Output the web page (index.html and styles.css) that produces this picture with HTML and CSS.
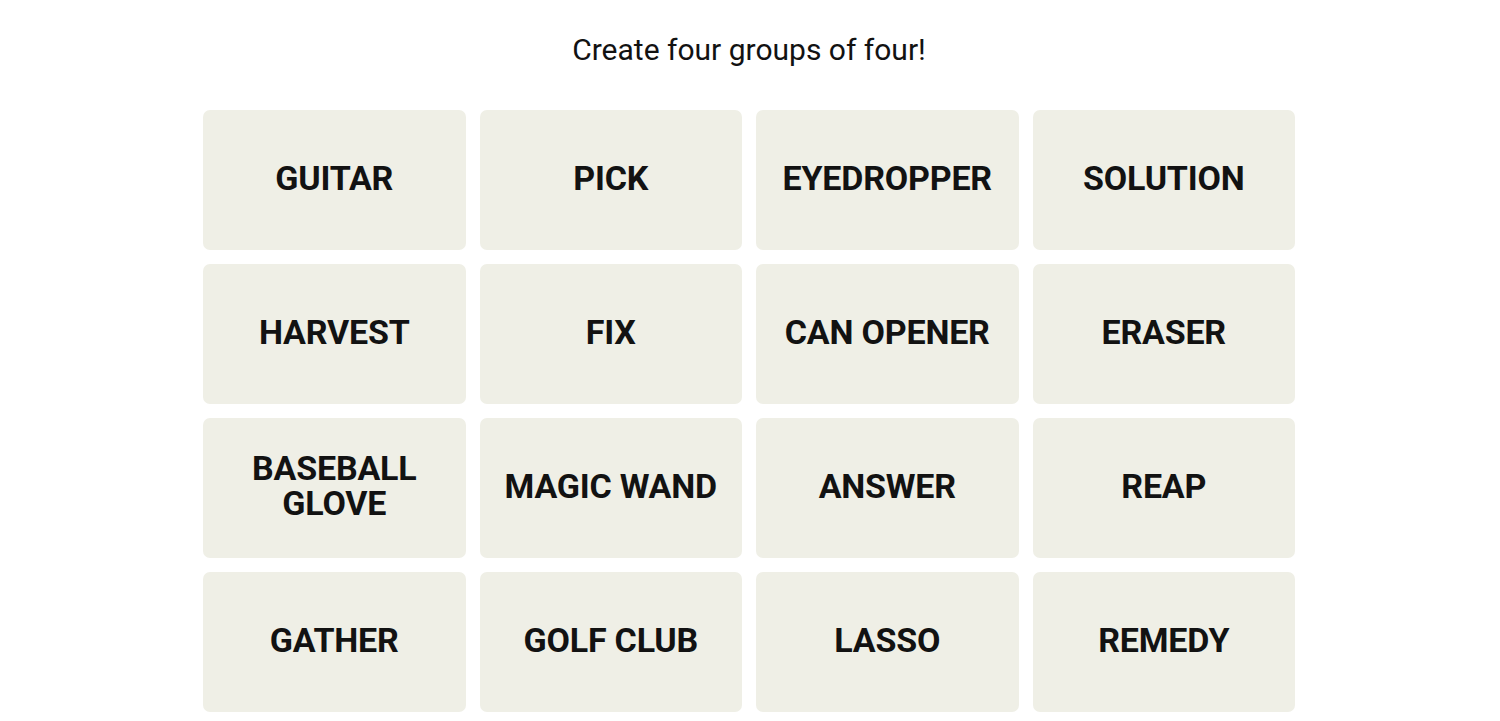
FILE: index.html
```html
<!DOCTYPE html>
<html lang="en">
<head>
  <meta charset="UTF-8">
  <title>Connections</title>
  <link rel="stylesheet" href="styles.css">
</head>
<body>
  <main class="game">
    <p class="prompt">Create four groups of four!</p>
    <div class="board">
      <button class="tile">GUITAR</button>
      <button class="tile">PICK</button>
      <button class="tile">EYEDROPPER</button>
      <button class="tile">SOLUTION</button>
      <button class="tile">HARVEST</button>
      <button class="tile">FIX</button>
      <button class="tile">CAN OPENER</button>
      <button class="tile">ERASER</button>
      <button class="tile">BASEBALL GLOVE</button>
      <button class="tile">MAGIC WAND</button>
      <button class="tile">ANSWER</button>
      <button class="tile">REAP</button>
      <button class="tile">GATHER</button>
      <button class="tile">GOLF CLUB</button>
      <button class="tile">LASSO</button>
      <button class="tile">REMEDY</button>
    </div>
  </main>
</body>
</html>
```

FILE: styles.css
```css
:root {
  --tile-color: #efefe6;
  --text-color: #121212;
  --body-font: "Roboto", "Liberation Sans", sans-serif;
}

* {
  margin: 0;
  padding: 0;
  box-sizing: border-box;
}

body {
  background: #fff;
  color: var(--text-color);
  font-family: var(--body-font);
  padding-right: 2px;
}

.game {
  width: 1092px;
  margin: 0 auto;
  padding-top: 31px;
}

.prompt {
  font-size: 30px;
  line-height: 38px;
  text-align: center;
  margin-bottom: 41px;
}

.board {
  display: grid;
  grid-template-columns: repeat(4, 1fr);
  grid-auto-rows: 140px;
  gap: 14px;
}

.tile {
  display: flex;
  align-items: center;
  justify-content: center;
  padding: 0 20px 4px;
  background: var(--tile-color);
  border: none;
  border-radius: 7px;
  color: var(--text-color);
  font-family: var(--body-font);
  font-size: 34px;
  font-weight: 700;
  line-height: 35px;
  letter-spacing: -0.2px;
  text-align: center;
  cursor: pointer;
}
```
